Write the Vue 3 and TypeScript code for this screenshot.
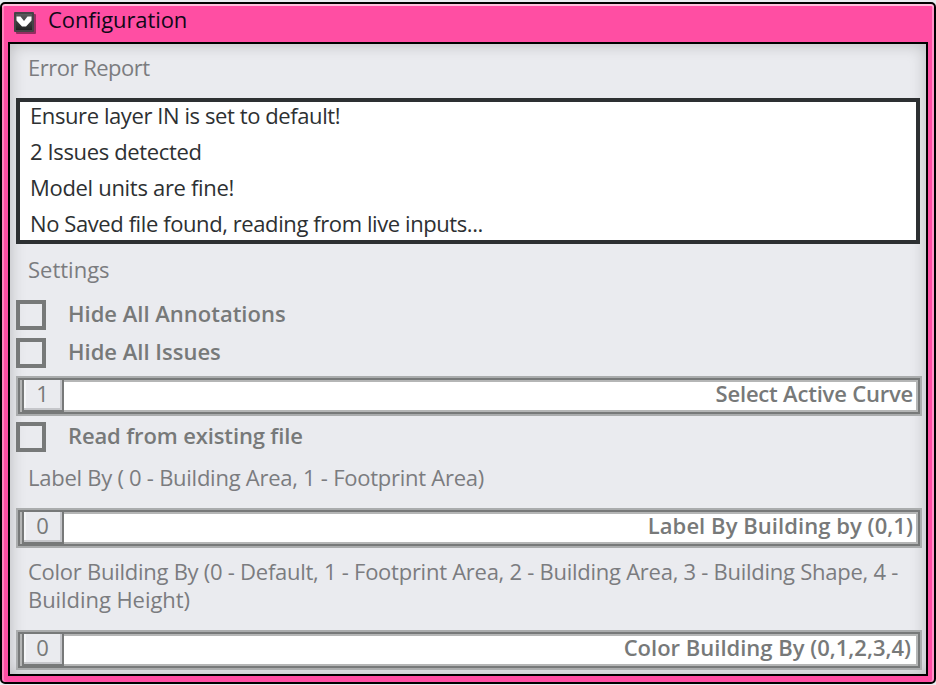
<script setup lang="ts">
const messages: { text: string; cls: string }[] = [
  { text: 'Ensure layer IN is set to default!', cls: 'm1' },
  { text: '2 Issues detected', cls: 'm2' },
  { text: 'Model units are fine!', cls: 'm3' },
  { text: 'No Saved file found, reading from live inputs...', cls: 'm4' },
]
</script>

<template>
  <div class="window">
    <header class="title">
      <svg class="toggle" width="22" height="22" viewBox="0 0 22 22">
        <defs>
          <linearGradient id="face" x1="0" y1="0" x2="0" y2="1">
            <stop offset="0" stop-color="#5c5c5e" />
            <stop offset="1" stop-color="#222224" />
          </linearGradient>
        </defs>
        <rect x="2" y="2" width="20" height="20" rx="1" fill="#7a2550" opacity=".8" />
        <rect width="20" height="20" rx="1" fill="#444446" />
        <rect x="2" y="2" width="16" height="16" fill="url(#face)" />
        <path d="M2.500 4.500h4l3.500 4.500 3.500-4.500h4v4l-5.500 6h-4l-5.500-6z" fill="#fff" />
      </svg>
      <span class="t title-text">Configuration</span>
    </header>
    <main class="body">
      <div class="label error-label"><span class="t">Error Report</span></div>
      <div class="report">
        <div v-for="m in messages" :key="m.cls" class="line"><span class="t" :class="m.cls">{{ m.text }}</span></div>
      </div>
      <div class="label settings-label"><span class="t">Settings</span></div>
      <div class="check c1"><i class="box"></i><span class="t b1">Hide All Annotations</span></div>
      <div class="check c2"><i class="box"></i><span class="t b2">Hide All Issues</span></div>
      <div class="field"><div class="inner"><span class="num">1</span><span class="t f1">Select Active Curve</span></div></div>
      <div class="check c3"><i class="box"></i><span class="t b3">Read from existing file</span></div>
      <div class="label by-label"><span class="t">Label By ( 0 - Building Area, 1 - Footprint Area)</span></div>
      <div class="field"><div class="inner"><span class="num">0</span><span class="t f2">Label By Building by (0,1)</span></div></div>
      <div class="label color-label"><span class="t k1">Color Building By (0 - Default, 1 - Footprint Area, 2 - Building Area, 3 - Building Shape, 4 -</span><br><span class="t k2">Building Height)</span></div>
      <div class="field"><div class="inner"><span class="num">0</span><span class="t f3">Color Building By (0,1,2,3,4)</span></div></div>
    </main>
  </div>
</template>

<style>
body { background: #e9ecf0; overflow: hidden; }
</style>
<style scoped>
.window { box-sizing: border-box; width: 936px; height: 682px; margin-top: 2px; border: 2px solid #000; border-radius: 5px; padding: 0 4px 4px; background: #ff4ea3; box-shadow: inset 0 2px #ffc0dd, inset 2px 0 #ff83be, inset -2px 0 #ff93c7; font: 22px/26px "Open Sans", "Noto Sans", sans-serif; color: #2d3032; display: flex; flex-direction: column; }
.t { white-space: pre; }
.title { height: 38px; flex: none; display: flex; padding-left: 8px; align-items: flex-start; color: #100818; }
.toggle { margin-top: 8px; }
.title-text { margin-left: 12px; margin-top: 2px; letter-spacing: -.08px; }
.body { flex: none; box-sizing: border-box; margin: 0 2px; height: 634px; width: 920px; border: 2px solid #000; background: #eaebef; box-shadow: inset 0 0 16px rgba(0,0,0,.22); padding: 0 4px 0 6px; }
.label, .report, .field, .check { box-sizing: border-box; }
.label { padding-left: 12px; color: #7b7c7f; }
.error-label { height: 54px; padding-top: 10px; letter-spacing: -.5px; }
.report { width: 904px; height: 146px; border: 4px solid #2d3032; background: #fff; padding-left: 10px; }
.line { height: 36px; }
.m1, .m4 { letter-spacing: -.41px; }
.m2 { letter-spacing: -.36px; }
.m3 { letter-spacing: -.31px; }
.settings-label { height: 56px; padding-top: 12px; }
.check { display: flex; height: 38px; font-weight: 600; color: #777979; }
.c3 { margin-top: 6px; }
.b3 { letter-spacing: -.13px; }
.box { box-sizing: border-box; width: 30px; height: 30px; border: 4px solid #777979; margin-right: 22px; }
.field { width: 906px; height: 40px; border: 2px solid #aaacad; }
.inner { box-sizing: border-box; height: 36px; border: 2px solid #777979; display: flex; justify-content: space-between; background: #fff; box-shadow: inset 0 0 0 2px #b5b6b6; font-weight: 600; color: #777979; padding: 0 5px 0 2px; }
.num { box-sizing: border-box; width: 42px; height: 32px; border: 2px solid #777979; border-top: 0; background: #eaebef; box-shadow: inset -2px -2px #c5c6ca, inset 2px 0 #f5f6f8; padding-right: 1px; text-align: center; line-height: 26px; font-weight: 400; }
.f1 { letter-spacing: -.2px; }
.f2 { letter-spacing: .06px; }
.f3 { margin-right: 2px; }
.by-label { height: 48px; padding-top: 4px; letter-spacing: -.26px; }
.color-label { height: 82px; padding-top: 9px; line-height: 28px; }
.k1 { letter-spacing: -.26px; }
.k2 { letter-spacing: -.06px; }
</style>
